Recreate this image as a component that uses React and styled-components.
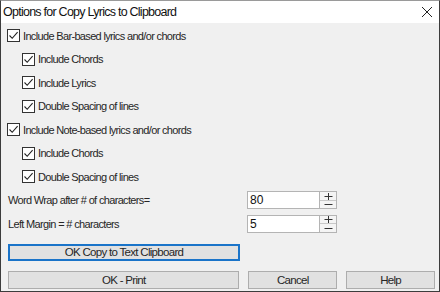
import React from 'react'
import styled, { createGlobalStyle } from 'styled-components'

const Global = createGlobalStyle`
  html, body {
    margin: 0;
    padding: 0;
    background: #ffffff;
  }
  * { box-sizing: border-box; }
`

const Window = styled.div`
  width: 440px;
  height: 292px;
  border: 1px solid #3c3c3c;
  border-top-color: #9a9a9a;
  background: #f0f0f0;
  display: flex;
  flex-direction: column;
  font-family: "Liberation Sans", Arial, sans-serif;
  color: #262626;
  overflow: hidden;
`

const TitleBar = styled.div`
  height: 22px;
  background: #ffffff;
  display: flex;
  align-items: center;
  justify-content: space-between;
  padding: 0 6px 0 2px;
  font-size: 12.5px;
  letter-spacing: -0.75px;
  color: #111;
`

const Close = styled.svg`
  width: 12px;
  height: 12px;
`

const Body = styled.div`
  flex: 1;
  display: flex;
  flex-direction: column;
  padding: 1px 4px 0 6px;
`

const Row = styled.div`
  height: 23.5px;
  display: flex;
  align-items: center;
  padding-left: ${p => (p.indent ? 15 : 0)}px;
  font-size: 11px;
  letter-spacing: -0.66px;
`

const Box = styled.span`
  width: 13px;
  height: 13px;
  border: 1px solid #333;
  background: #fff;
  display: inline-flex;
  align-items: center;
  justify-content: center;
  margin-right: 3px;
  flex: none;
`

const FieldRow = styled(Row)`
  justify-content: space-between;
  padding-left: 1px;
  padding-right: 98px;
`

const Spin = styled.div`
  width: 90px;
  height: 18px;
  border: 1px solid #b4b4b4;
  background: #fff;
  display: flex;
`

const SpinText = styled.div`
  flex: 1;
  font-size: 12px;
  padding: 1px 0 0 2px;
  letter-spacing: 0;
  color: #111;
`

const SpinBtns = styled.div`
  width: 17px;
  border-left: 1px solid #b4b4b4;
  display: flex;
  flex-direction: column;
  background: #f4f4f4;
`

const SpinBtn = styled.div`
  flex: 1;
  display: flex;
  align-items: center;
  justify-content: center;
  & + & { border-top: 1px solid #c8c8c8; }
`

const Button = styled.div`
  height: ${p => p.h || 18}px;
  width: ${p => p.w}px;
  border: ${p => (p.primary ? '2px solid #1a74c9' : '1px solid #adadad')};
  background: #e1e1e1;
  display: flex;
  align-items: center;
  justify-content: center;
  font-size: 11.5px;
  letter-spacing: -0.7px;
`

const CopyRow = styled.div`
  margin-top: 8px;
  padding-left: 1px;
`

const BottomRow = styled.div`
  margin-top: 10px;
  padding-left: 1px;
  display: flex;
  gap: 9px;
`

const Check = () => (
  <Box>
    <svg width="11" height="11" viewBox="0 0 11 11">
      <path d="M1.5 5.5 L4.2 8.3 L9.6 2.2" fill="none" stroke="#222" strokeWidth="1.1" />
    </svg>
  </Box>
)

const Option = ({ indent, children }) => (
  <Row indent={indent}>
    <Check />
    {children}
  </Row>
)

const Spinner = ({ value }) => (
  <Spin>
    <SpinText>{value}</SpinText>
    <SpinBtns>
      <SpinBtn>
        <svg width="9" height="7" viewBox="0 0 9 7">
          <path d="M0.5 3.5 H8.5 M4.5 0 V7" stroke="#333" strokeWidth="1" />
        </svg>
      </SpinBtn>
      <SpinBtn>
        <svg width="9" height="7" viewBox="0 0 9 7">
          <path d="M0.5 3.5 H8.5" stroke="#333" strokeWidth="1" />
        </svg>
      </SpinBtn>
    </SpinBtns>
  </Spin>
)

export default function App() {
  return (
    <>
      <Global />
      <Window>
        <TitleBar>
          <span>Options for Copy Lyrics to Clipboard</span>
          <Close viewBox="0 0 12 12">
            <path d="M1 1 L11 11 M11 1 L1 11" stroke="#222" strokeWidth="1" />
          </Close>
        </TitleBar>
        <Body>
          <Option>Include Bar-based lyrics and/or chords</Option>
          <Option indent>Include Chords</Option>
          <Option indent>Include Lyrics</Option>
          <Option indent>Double Spacing of lines</Option>
          <Option>Include Note-based lyrics and/or chords</Option>
          <Option indent>Include Chords</Option>
          <Option indent>Double Spacing of lines</Option>
          <FieldRow>
            <span>Word Wrap after # of characters=</span>
            <Spinner value="80" />
          </FieldRow>
          <FieldRow>
            <span>Left Margin = # characters</span>
            <Spinner value="5" />
          </FieldRow>
          <CopyRow>
            <Button primary w={232} h={17}>OK Copy to Text Clipboard</Button>
          </CopyRow>
          <BottomRow>
            <Button w={232}>OK - Print</Button>
            <Button w={89}>Cancel</Button>
            <Button w={89}>Help</Button>
          </BottomRow>
        </Body>
      </Window>
    </>
  )
}
